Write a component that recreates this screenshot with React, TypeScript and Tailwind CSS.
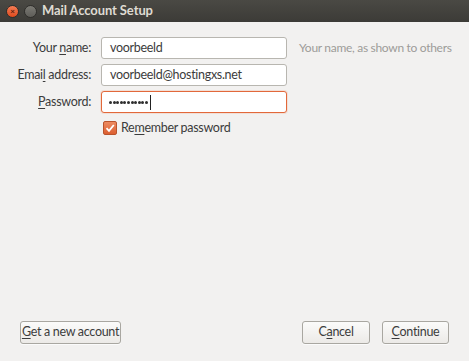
import React from "react";

const font = { fontFamily: 'Lato, "Noto Sans", sans-serif' };

function U({ children }: { children: React.ReactNode }) {
  return <span className="underline underline-offset-2 decoration-1">{children}</span>;
}

function Button({ children, className = "" }: { children: React.ReactNode; className?: string }) {
  return (
    <button
      className={`h-[23px] whitespace-nowrap rounded-[3px] border border-[#a9a7a1] bg-gradient-to-b from-[#fbfbfa] to-[#eceae7] text-[12.5px] tracking-[-0.3px] text-[#3c3c3c] shadow-[0_1px_0_rgba(255,255,255,0.7)] ${className}`}
    >
      {children}
    </button>
  );
}

export default function App() {
  return (
    <div className="w-[469px] h-[361px] flex flex-col bg-[#f2f1f0] overflow-hidden" style={font}>
      {/* Title bar */}
      <div className="h-[22px] shrink-0 flex items-center bg-gradient-to-b from-[#4a4944] to-[#3c3b37] px-[6px] gap-[4px]">
        <div className="w-[13px] h-[13px] rounded-full bg-gradient-to-b from-[#f37b53] to-[#df4a1b] flex items-center justify-center border border-[#2f2e2b]">
          <span className="text-[8px] leading-none font-bold text-[#5a1d0b]">×</span>
        </div>
        <div className="w-[13px] h-[13px] rounded-full bg-gradient-to-b from-[#7b7a74] to-[#5e5d58] border border-[#2f2e2b] ml-[1px]" />
        <span className="ml-[1px] text-[13px] font-bold tracking-[-0.1px] text-[#dfdbd2] whitespace-nowrap">Mail Account Setup</span>
      </div>

      {/* Form */}
      <div className="pt-[15px] grid grid-cols-[91px_186px_auto] gap-x-[10px] gap-y-[5px] items-center text-[12.5px] tracking-[-0.3px] text-[#3c3c3c] whitespace-nowrap">
        <span className="text-right">Your <U>n</U>ame:</span>
        <div className="h-[22px] rounded-[3px] border border-[#b8b6b0] bg-white flex items-center px-[8px]">voorbeeld</div>
        <span className="text-[#9d9c99] ml-[2px] text-[12px]">Your name, as shown to others</span>

        <span className="text-right">Emai<U>l</U> address:</span>
        <div className="h-[22px] rounded-[3px] border border-[#b8b6b0] bg-white flex items-center px-[8px]">voorbeeld@hostingxs.net</div>
        <span />

        <span className="text-right"><U>P</U>assword:</span>
        <div className="h-[22px] rounded-[3px] border border-[#e2683a] bg-white flex items-center px-[7px] shadow-[0_0_0_1px_rgba(240,119,70,0.15)]">
          <span className="flex gap-[0.6px]">
            {Array.from({ length: 11 }).map((_, i) => (
              <span key={i} className="w-[3px] h-[3px] rounded-full bg-[#2e2e2e]" />
            ))}
          </span>
          <span className="w-px h-[15px] bg-[#222] ml-[2px]" />
        </div>
        <span />

        <span />
        <div className="flex items-center gap-[4px] mt-[1px] pl-[2px]">
          <div className="w-[14px] h-[14px] rounded-[2px] bg-gradient-to-b from-[#ec8a60] to-[#dc5f30] border border-[#b9532c] flex items-center justify-center">
            <svg width="10" height="10" viewBox="0 0 10 10">
              <path d="M1.5 5.2 L4 7.8 L8.8 2" fill="none" stroke="#fff" strokeWidth="1.8" />
            </svg>
          </div>
          <span>Re<U>m</U>ember password</span>
        </div>
        <span />
      </div>

      {/* Buttons */}
      <div className="mt-auto flex items-center px-[20px] pb-[17px]">
        <Button className="w-[101px]"><U>G</U>et a new account</Button>
        <div className="flex-1" />
        <Button className="w-[68px]">C<U>a</U>ncel</Button>
        <Button className="w-[67px] ml-[12px]"><U>C</U>ontinue</Button>
      </div>
    </div>
  );
}
